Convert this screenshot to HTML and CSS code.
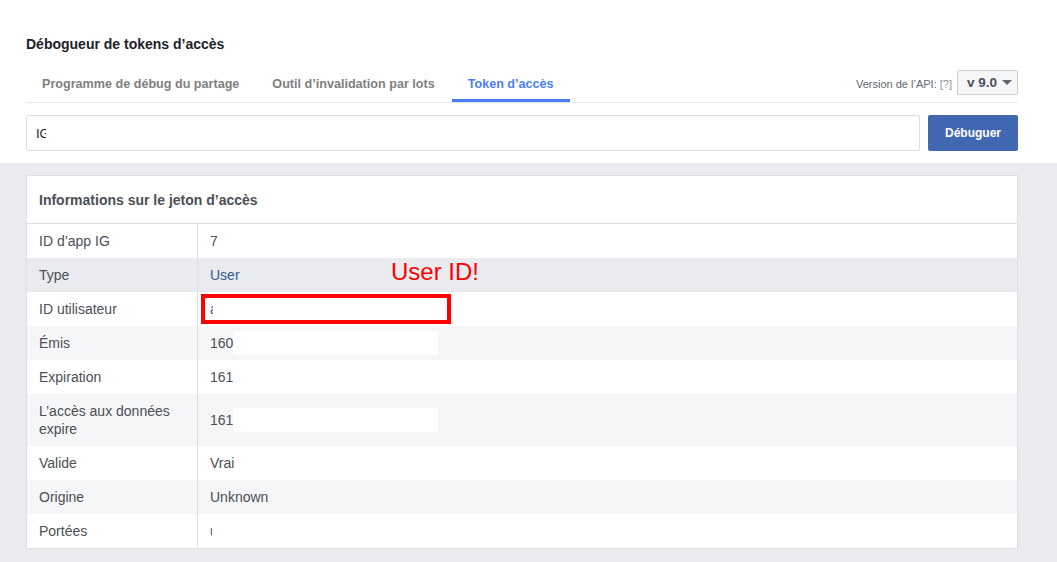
FILE: index.html
```html
<!DOCTYPE html>
<html lang="fr">
<head>
<meta charset="utf-8">
<title>Débogueur de tokens d’accès</title>
<link rel="stylesheet" href="styles.css">
</head>
<body>
<div class="top">
  <div class="wrap">
    <h1 class="title">Débogueur de tokens d’accès</h1>
    <div class="tabbar">
      <a class="tab">Programme de débug du partage</a>
      <a class="tab">Outil d’invalidation par lots</a>
      <a class="tab active">Token d’accès</a>
      <div class="spacer"></div>
      <span class="version">Version de l’API: <span class="help">[?]</span></span>
      <div class="select">v 9.0 <span class="caret"></span></div>
    </div>
    <div class="inputrow">
      <div class="input"><span class="clip clip-ig">IG</span></div>
      <button class="btn">Débuguer</button>
    </div>
  </div>
</div>
<div class="main">
  <div class="wrap">
    <div class="card">
      <div class="card-head">Informations sur le jeton d’accès</div>
      <div class="rows">
        <div class="row"><div class="lbl">ID d’app IG</div><div class="val">7</div></div>
        <div class="row hl"><div class="lbl">Type</div><div class="val link">User</div></div>
        <div class="row"><div class="lbl">ID utilisateur</div><div class="val link"><span class="clip clip-a">a</span></div></div>
        <div class="row alt"><div class="lbl">Émis</div><div class="val">160<span class="redact"></span></div></div>
        <div class="row"><div class="lbl">Expiration</div><div class="val">161<span class="redact"></span></div></div>
        <div class="row alt tall"><div class="lbl">L’accès aux données expire</div><div class="val">161<span class="redact"></span></div></div>
        <div class="row"><div class="lbl">Valide</div><div class="val">Vrai</div></div>
        <div class="row alt"><div class="lbl">Origine</div><div class="val">Unknown</div></div>
        <div class="row"><div class="lbl">Portées</div><div class="val link"><span class="clip clip-u">u</span></div></div>
      </div>
      <div class="annot-text">User ID!</div>
      <div class="annot-box"></div>
    </div>
  </div>
</div>
</body>
</html>
```
FILE: styles.css
```css
html, body {
  margin: 0;
  padding: 0;
}
body {
  font-family: "Liberation Sans", Arial, Helvetica, sans-serif;
  color: #1d2129;
  background: #e9ebee;
  height: 562px;
  overflow: hidden;
}
.wrap {
  width: 992px;
  margin-left: 26px;
}
.top {
  background: #fff;
  padding: 35px 0 12px;
}
.title {
  margin: 0;
  font-size: 14px;
  font-weight: bold;
  line-height: 18px;
  color: #1d2129;
}
.tabbar {
  margin-top: 12px;
  display: flex;
  align-items: center;
  height: 37px;
  border-bottom: 1px solid #e5e6e9;
}
.tab {
  box-sizing: border-box;
  height: 37px;
  padding: 3px 16px 0;
  display: flex;
  align-items: center;
  font-size: 12.6px;
  font-weight: bold;
  color: #7f7f7f;
  border-bottom: 3px solid transparent;
  margin-right: 1px;
}
.tab.active {
  color: #4a7ef6;
  border-bottom-color: #4a7ef6;
}
.spacer {
  flex: 1;
}
.version {
  font-size: 11px;
  color: #606770;
  margin-right: 5px;
  margin-top: 1px;
}
.help {
  color: #90949c;
}
.select {
  box-sizing: border-box;
  height: 25px;
  width: 61px;
  padding: 0 0 0 9px;
  display: flex;
  align-items: center;
  background: #f5f6f7;
  border: 1px solid #ccd0d5;
  border-radius: 2px;
  font-size: 13.5px;
  font-weight: bold;
  color: #4b4f56;
  margin-bottom: 3px;
}
.caret {
  width: 0;
  height: 0;
  border-left: 5px solid transparent;
  border-right: 5px solid transparent;
  border-top: 5px solid #606770;
  margin-left: 5px;
}
.inputrow {
  margin-top: 12px;
  display: flex;
  gap: 8px;
  height: 36px;
}
.input {
  flex: 1;
  box-sizing: border-box;
  border: 1px solid #dddfe2;
  border-radius: 2px;
  display: flex;
  align-items: center;
  padding-left: 9px;
  font-size: 13px;
  color: #1d2129;
}
.btn {
  width: 90px;
  border: none;
  border-radius: 2px;
  background: #4267b2;
  color: #fff;
  font-family: inherit;
  font-size: 12px;
  font-weight: bold;
  padding: 0;
}
.clip {
  display: inline-block;
  overflow: hidden;
  white-space: nowrap;
  vertical-align: top;
}
.clip-ig { width: 10px; }
.clip-a { width: 3px; }
.clip-u { width: 2px; }
.main {
  padding-top: 12px;
}
.card {
  position: relative;
  background: #fff;
  border: 1px solid #dddfe2;
}
.card-head {
  height: 47px;
  display: flex;
  align-items: center;
  padding-left: 12px;
  font-size: 14px;
  font-weight: bold;
  color: #4b4f56;
  border-bottom: 1px solid #dddfe2;
}
.row {
  display: flex;
  min-height: 34px;
  font-size: 14px;
  color: #4b4f56;
}
.row.alt { background: #f5f6f7; }
.row.hl { background: #e9ebee; }
.row.tall { min-height: 52px; }
.lbl {
  box-sizing: border-box;
  width: 171px;
  flex: none;
  padding: 0 12px;
  border-right: 1px solid #dddfe2;
  display: flex;
  align-items: center;
  line-height: 18px;
}
.val {
  flex: 1;
  padding-left: 12px;
  display: flex;
  align-items: center;
  color: #4b4f56;
}
.val.link { color: #385898; }
.redact {
  display: inline-block;
  width: 205px;
  height: 24px;
  background: #fff;
}
.annot-text {
  position: absolute;
  left: 364px;
  top: 82px;
  font-size: 24px;
  color: #ff0000;
  line-height: 28px;
}
.annot-box {
  position: absolute;
  left: 174px;
  top: 118px;
  width: 250px;
  height: 30px;
  box-sizing: border-box;
  border: 4px solid #ff0000;
}
```
